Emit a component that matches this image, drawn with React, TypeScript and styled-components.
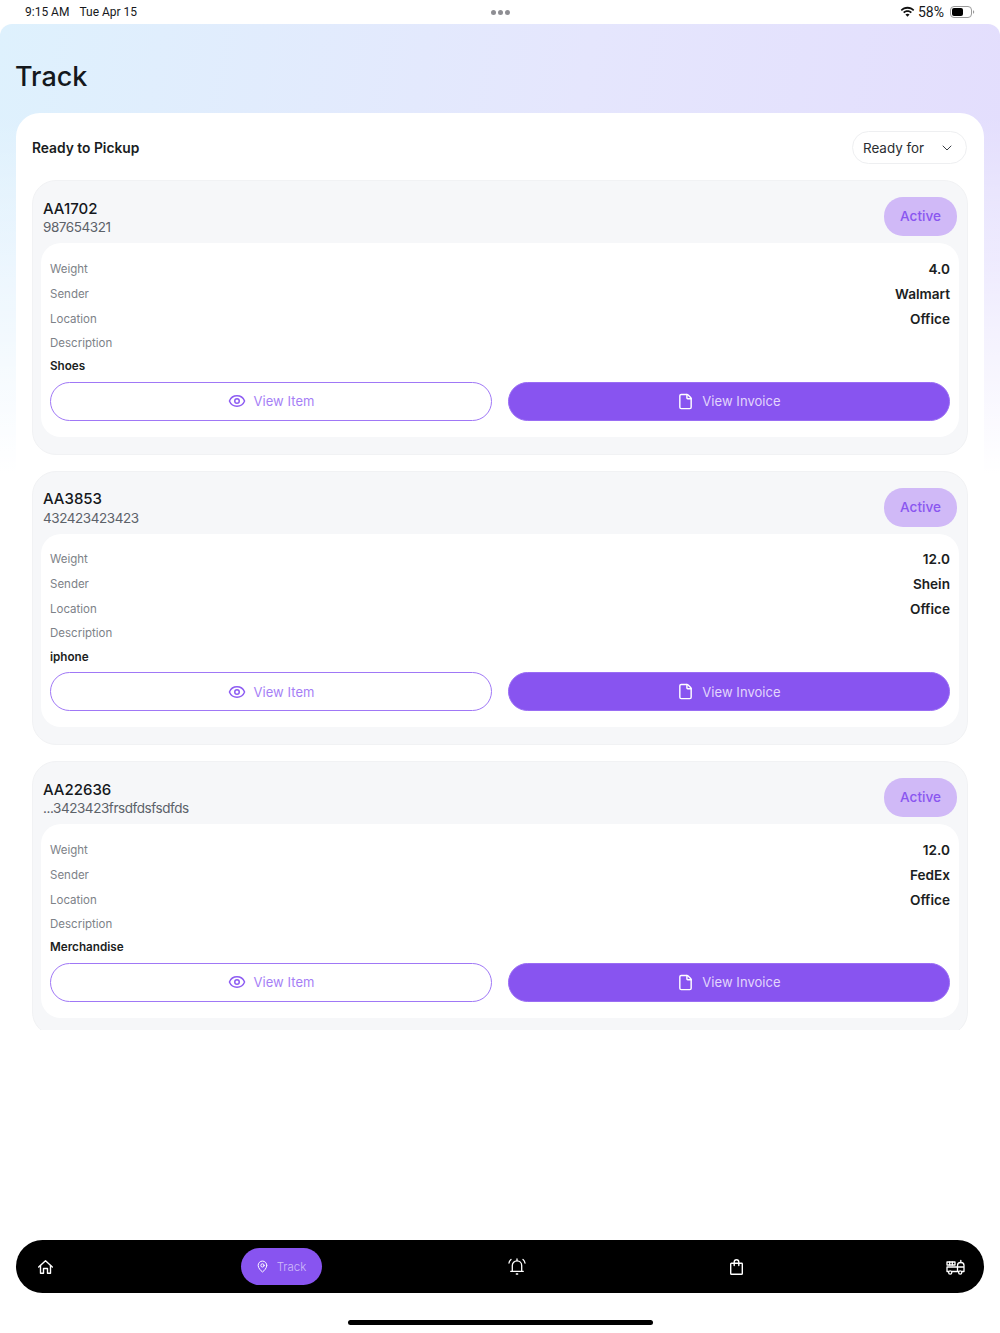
import React from "react";
import styled, { createGlobalStyle } from "styled-components";
import { ChevronDown, Eye, File, MapPin } from "lucide-react";

const Global = createGlobalStyle`
  html, body { margin: 0; padding: 0; background: #fff; }
  * { box-sizing: border-box; }
  body { font-family: "Inter", "Noto Sans", sans-serif; color: #16191d; }
`;

const Page = styled.div`
  width: 1000px;
  height: 1333px;
  display: flex;
  flex-direction: column;
  overflow: hidden;
  background: #fff;
`;

const StatusBar = styled.div`
  height: 24px;
  flex: none;
  display: grid;
  grid-template-columns: 1fr auto 1fr;
  align-items: center;
  padding: 0 25px;
  font-family: "Roboto", sans-serif;
  font-size: 12px;
  color: #16181b;
`;

const StatusLeft = styled.div`
  display: flex;
  gap: 10px;
  padding-bottom: 1px;
`;

const Dots = styled.div`
  display: flex;
  gap: 2px;
`;

const Dot = styled.span`
  width: 5px;
  height: 5px;
  border-radius: 50%;
  background: #8e8e93;
`;

const StatusRight = styled.div`
  display: flex;
  justify-content: flex-end;
  align-items: center;
  gap: 3px;
  font-size: 14px;
`;

const BatteryWrap = styled.span`
  display: flex;
  margin-left: 3px;
`;

const Screen = styled.div`
  flex: 1;
  min-height: 0;
  border-radius: 12px 12px 0 0;
  background:
    linear-gradient(to bottom, rgba(255, 255, 255, 0) 20%, #fff 100%) 0 0 / 100% 450px no-repeat,
    linear-gradient(100deg, #def1fd 0%, #e5e6fd 55%, #e3ddfd 100%) 0 0 / 100% 450px no-repeat;
`;

const Title = styled.h1`
  margin: 0;
  height: 89px;
  padding: 36px 0 0 15px;
  font-size: 27px;
  line-height: 34px;
  font-weight: 500;
  color: #14181c;
`;

const Panel = styled.section`
  margin: 0 16px;
  padding: 18px 16px 0;
  background: #fff;
  border-radius: 24px 24px 0 0;
`;

const PanelHead = styled.div`
  display: flex;
  align-items: center;
  justify-content: space-between;
  height: 33px;
  margin-bottom: 16px;
`;

const PanelTitle = styled.h2`
  margin: 0;
  font-size: 13.8px;
  font-weight: 600;
  color: #1a1d21;
`;

const Select = styled.div`
  width: 115px;
  height: 33px;
  margin-right: 1px;
  padding: 0 11px 0 10px;
  display: flex;
  align-items: center;
  justify-content: space-between;
  border: 1.5px solid #eeeff1;
  border-radius: 17px;
  font-size: 13.4px;
  color: #2a2d31;
`;

const List = styled.div`
  height: 850px;
  overflow: hidden;
  display: flex;
  flex-direction: column;
  gap: 16px;
`;

const Card = styled.article`
  flex: none;
  padding: 0 8px 17px;
  background: #f6f7f9;
  border: 1px solid #f1f2f4;
  border-radius: 24px;
`;

const CardHead = styled.header`
  display: flex;
  justify-content: space-between;
  padding: 16px 2px 7px 2px;
`;

const Codes = styled.div`
  display: flex;
  flex-direction: column;
  padding-top: 1.5px;
`;

const Code = styled.div`
  font-size: 15px;
  line-height: 20px;
  font-weight: 500;
  color: #15181c;
`;

const Tracking = styled.div`
  margin-top: -0.5px;
  font-size: 13.5px;
  line-height: 18px;
  letter-spacing: -0.44px;
  color: #5c6269;
`;

const Chip = styled.div`
  width: 73px;
  height: 39px;
  padding-bottom: 1px;
  display: flex;
  align-items: center;
  justify-content: center;
  border-radius: 19px;
  background: #d0b9f7;
  color: #8a56f0;
  font-size: 13.6px;
  font-weight: 500;
`;

const Body = styled.div`
  padding: 13px 9px 16px;
  background: #fff;
  border-radius: 20px;
`;

const Row = styled.div`
  height: 25px;
  display: flex;
  align-items: center;
  justify-content: space-between;
`;

const Label = styled.span`
  font-size: 11.5px;
  color: #7d8288;
`;

const Value = styled.span`
  font-size: 13.6px;
  font-weight: 600;
  color: #1b1e22;
`;

const DescLabel = styled(Label)`
  display: flex;
  align-items: center;
  height: 24px;
  padding-bottom: 1px;
`;

const DescText = styled.div`
  height: 20.5px;
  margin-bottom: 6px;
  font-size: 11.7px;
  line-height: 23px;
  font-weight: 600;
  color: #1b1e22;
`;

const Actions = styled.div`
  display: grid;
  grid-template-columns: 1fr 1fr;
  gap: 16px;
`;

const ActionButton = styled.button<{ $solid?: boolean }>`
  height: 39px;
  display: flex;
  align-items: center;
  justify-content: center;
  gap: 8px;
  border-radius: 20px;
  border: 1.5px solid ${(p) => (p.$solid ? "#9a6df4" : "#a078f6")};
  background: ${(p) => (p.$solid ? "#8854f0" : "#fff")};
  color: ${(p) => (p.$solid ? "#e2d6fc" : "#a67ff6")};
  font-family: inherit;
  font-size: 13px;
  letter-spacing: 0.05px;
  font-weight: 400;
`;

const Nav = styled.nav`
  flex: none;
  height: 53px;
  margin: 0 16px;
  display: grid;
  grid-template-columns: 58px 414px 58px 380px 58px;
  align-items: center;
  justify-items: center;
  background: #000;
  border-radius: 27px;
  color: #fff;
`;

const TrackPill = styled.div`
  width: 81px;
  height: 37px;
  display: flex;
  align-items: center;
  justify-content: center;
  gap: 8px;
  border-radius: 19px;
  background: #8854f0;
  color: #cfbcf9;
  font-size: 11.5px;
  font-weight: 300;
`;

const IndicatorArea = styled.div`
  flex: none;
  height: 40px;
  display: flex;
  justify-content: center;
  padding-top: 27px;
`;

const Indicator = styled.div`
  width: 305px;
  height: 5px;
  border-radius: 3px;
  background: #000;
`;

const Wifi = () => (
  <svg width="15" height="12" viewBox="0 0 16 12" fill="#111">
    <path d="M8 2.400c2.300 0 4.400.900 6 2.400l1.200-1.300C13.300 1.600 10.800.400 8 .400S2.700 1.600.800 3.500L2 4.800c1.600-1.500 3.700-2.400 6-2.400z" />
    <path d="M8 6c1.300 0 2.500.500 3.400 1.300l1.300-1.300C11.400 4.800 9.800 4.100 8 4.100S4.600 4.800 3.300 6l1.300 1.300C5.500 6.500 6.700 6 8 6z" />
    <path d="M8 7.800c-.900 0-1.600.300-2.200.800L8 11l2.200-2.400c-.600-.500-1.300-.800-2.200-.800z" />
  </svg>
);

const Battery = () => (
  <svg width="25" height="12" viewBox="0 0 25 12" fill="none">
    <rect x="0.500" y="0.500" width="21" height="11" rx="3.500" stroke="#9a9a9a" />
    <rect x="2" y="2" width="11" height="8" rx="2" fill="#000" />
    <path d="M23 4.200c.800.300 1.200 1 1.200 1.800s-.400 1.500-1.200 1.800z" fill="#9a9a9a" />
  </svg>
);

const Home = () => (
  <svg width="15" height="14" viewBox="0 0 15 14" fill="none" stroke="#fff" strokeWidth="1.400" strokeLinejoin="round" strokeLinecap="round">
    <path d="M.7 7 7.500.8 14.300 7" />
    <path d="M2.500 5.500v7.800h3V8.500h4v4.800h3V5.500" />
  </svg>
);

const Bell = () => (
  <svg width="18" height="17" viewBox="0 0 18 17" fill="none" stroke="#fff" strokeWidth="1.300" strokeLinejoin="round" strokeLinecap="round">
    <path d="M4.300 13V7.500a4.700 4.700 0 0 1 9.400 0V13" />
    <path d="M2.700 13.300h12.600" />
    <path d="M9 1v1.500" />
    <path d="M8.300 16h1.400" />
    <path d="M1 5q.400-2.200 2-3.500" />
    <path d="M17 5q-.400-2.200-2-3.500" />
  </svg>
);

const Bag = () => (
  <svg width="13" height="16" viewBox="0 0 13 16" fill="none" stroke="#fff" strokeWidth="1.400" strokeLinejoin="round" strokeLinecap="round">
    <path d="M1.400 4.200h10.200a.7.700 0 0 1 .7.700v9.500a.8.800 0 0 1-.8.800H1.500a.8.800 0 0 1-.8-.800V4.900a.7.700 0 0 1 .7-.700z" />
    <path d="M4.200 6.500V3a2.300 2.300 0 0 1 4.600 0v3.500" />
  </svg>
);

const FireTruck = () => (
  <svg width="19" height="16" viewBox="0 0 19 16" fill="none" stroke="#fff" strokeWidth="1.300" strokeLinejoin="round" strokeLinecap="round">
    <rect x="1" y="3" width="8" height="3" />
    <path d="M3.700 3v3M6.300 3v3" />
    <path d="M1 8h17M1 8v4.500h1.500M6 12.500h6.500M16 12.500h2V6.500a3 3 0 0 0-3-3h-.5a3 3 0 0 0-3 3V12.500" />
    <path d="M14.800 1.500v2" />
    <circle cx="4.200" cy="13.500" r="1.600" />
    <circle cx="14.200" cy="13.500" r="1.600" />
  </svg>
);

type Item = {
  code: string;
  tracking: string;
  weight: string;
  sender: string;
  location: string;
  description: string;
};

const items: Item[] = [
  { code: "AA1702", tracking: "987654321", weight: "4.0", sender: "Walmart", location: "Office", description: "Shoes" },
  { code: "AA3853", tracking: "432423423423", weight: "12.0", sender: "Shein", location: "Office", description: "iphone" },
  { code: "AA22636", tracking: "...3423423frsdfdsfsdfds", weight: "12.0", sender: "FedEx", location: "Office", description: "Merchandise" },
];

const ParcelCard = ({ item }: { item: Item }) => (
  <Card>
    <CardHead>
      <Codes>
        <Code>{item.code}</Code>
        <Tracking>{item.tracking}</Tracking>
      </Codes>
      <Chip>Active</Chip>
    </CardHead>
    <Body>
      <Row><Label>Weight</Label><Value>{item.weight}</Value></Row>
      <Row><Label>Sender</Label><Value>{item.sender}</Value></Row>
      <Row><Label>Location</Label><Value>{item.location}</Value></Row>
      <DescLabel>Description</DescLabel>
      <DescText>{item.description}</DescText>
      <Actions>
        <ActionButton>
          <Eye size={18} strokeWidth={2} color="#8d5cf2" />
          View Item
        </ActionButton>
        <ActionButton $solid>
          <File size={17} strokeWidth={2} color="#fff" />
          View Invoice
        </ActionButton>
      </Actions>
    </Body>
  </Card>
);

export default function App() {
  return (
    <Page>
      <Global />
      <StatusBar>
        <StatusLeft>
          <span>9:15 AM</span>
          <span>Tue Apr 15</span>
        </StatusLeft>
        <Dots><Dot /><Dot /><Dot /></Dots>
        <StatusRight>
          <Wifi />
          <span>58%</span>
          <BatteryWrap><Battery /></BatteryWrap>
        </StatusRight>
      </StatusBar>
      <Screen>
        <Title>Track</Title>
        <Panel>
          <PanelHead>
            <PanelTitle>Ready to Pickup</PanelTitle>
            <Select>
              Ready for
              <ChevronDown size={16} strokeWidth={1.500} color="#3a3f45" />
            </Select>
          </PanelHead>
          <List>
            {items.map((item) => (
              <ParcelCard key={item.code} item={item} />
            ))}
          </List>
        </Panel>
      </Screen>
      <Nav>
        <Home />
        <TrackPill>
          <MapPin size={13} strokeWidth={1.800} color="#fff" />
          Track
        </TrackPill>
        <Bell />
        <Bag />
        <FireTruck />
      </Nav>
      <IndicatorArea><Indicator /></IndicatorArea>
    </Page>
  );
}
